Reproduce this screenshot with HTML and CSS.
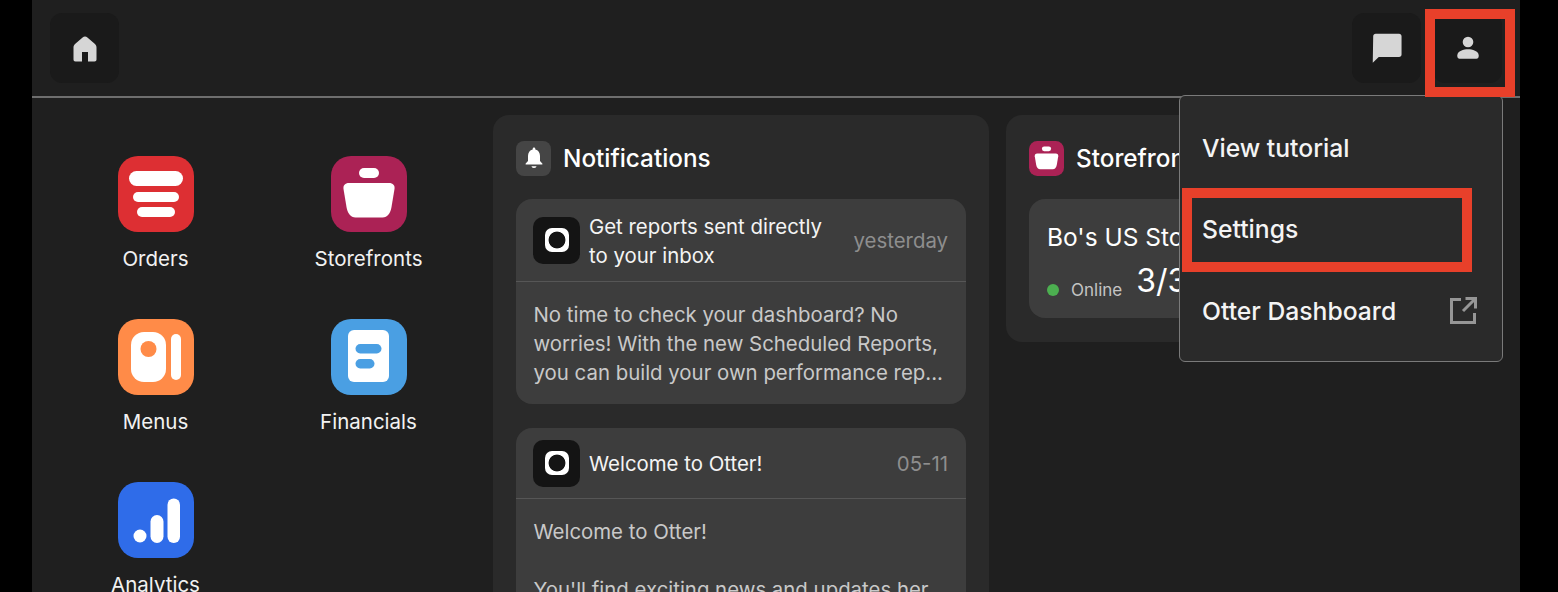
FILE: index.html
```html
<!DOCTYPE html>
<html lang="en">
<head>
  <meta charset="UTF-8" />
  <meta name="viewport" content="width=device-width, initial-scale=1.0" />
  <title>Otter Dashboard</title>
  <link rel="stylesheet" href="styles.css">
</head>
<body>
  <div class="app">
    <header class="topbar">
      <button class="icon-btn">
        <svg class="home-icon" width="24" height="26" viewBox="0 0 24 26"><path d="M12 .5c1 0 1.600.4 2.400 1l7 6c1.600 1.400 2.100 2.600 2.100 4v12c0 1.300-.7 2-2 2H15V16H9v9.500H2.500c-1.300 0-2-.7-2-2v-12c0-1.400.5-2.600 2.100-4l7-6c.8-.6 1.400-1 2.400-1z"/></svg>
      </button>
      <div class="topbar-right">
        <button class="icon-btn">
          <svg width="36" height="36" viewBox="0 0 24 24"><path d="M20 2.500H4.500c-1 0-1.700.7-1.700 1.700L2.500 21.800 6.500 18H20c1 0 1.700-.7 1.700-1.700V4.200c0-1-.7-1.700-1.700-1.700z"/></svg>
        </button>
        <button class="icon-btn">
          <svg width="32" height="32" viewBox="0 0 24 24"><circle cx="12" cy="7.500" r="4"/><path d="M12 13c-3.200 0-8 1.500-8 4.400v1c0 .9.700 1.600 1.600 1.600h12.800c.9 0 1.600-.7 1.600-1.600v-1C20 14.500 15.200 13 12 13z"/></svg>
        </button>
      </div>
    </header>

    <main class="content">
      <!-- App launcher -->
      <section class="launcher">
        <div class="launcher-item">
          <svg class="app-icon" viewBox="0 0 76 76"><rect width="76" height="76" rx="20" fill="#dd2f33"/><rect x="11" y="15" width="54" height="15" rx="7.500" fill="#fff"/><rect x="15" y="36" width="46" height="10" rx="5" fill="#fff"/><rect x="19" y="51" width="38" height="10" rx="5" fill="#fff"/></svg>
          <span>Orders</span>
        </div>
        <div class="launcher-item">
          <svg class="app-icon" viewBox="0 0 76 76"><rect width="76" height="76" rx="20" fill="#ab2255"/><rect x="28" y="12" width="20" height="10" rx="5" fill="#fff"/><path d="M18 27h40c4 0 6 2.500 5.500 6l-3 18c-1 6-4 10.500-9 10.500H24.500c-5 0-8-4.500-9-10.500l-3-18C12 29.500 14 27 18 27z" fill="#fff"/></svg>
          <span>Storefronts</span>
        </div>
        <div class="launcher-item">
          <svg class="app-icon" viewBox="0 0 76 76"><rect width="76" height="76" rx="20" fill="#ff8b48"/><rect x="13" y="13" width="35" height="50" rx="13" fill="#fff"/><circle cx="30.500" cy="30" r="8" fill="#ff8b48"/><rect x="53" y="15" width="10" height="46" rx="5" fill="#fff"/></svg>
          <span>Menus</span>
        </div>
        <div class="launcher-item">
          <svg class="app-icon" viewBox="0 0 76 76"><rect width="76" height="76" rx="20" fill="#4a9fe3"/><rect x="17" y="11" width="41" height="52" rx="6" fill="#fff"/><rect x="24.500" y="25" width="26" height="9.500" rx="4.700" fill="#4a9fe3"/><rect x="24.500" y="40" width="19" height="9.500" rx="4.700" fill="#4a9fe3"/></svg>
          <span>Financials</span>
        </div>
        <div class="launcher-item">
          <svg class="app-icon" viewBox="0 0 76 76"><rect width="76" height="76" rx="20" fill="#2f6ce9"/><circle cx="22" cy="54" r="6.500" fill="#fff"/><rect x="32.500" y="33" width="13" height="28" rx="6.500" fill="#fff"/><rect x="49.500" y="16.500" width="12.500" height="44.500" rx="6.200" fill="#fff"/></svg>
          <span>Analytics</span>
        </div>
      </section>

      <!-- Notifications -->
      <section class="panel notifications">
        <h2 class="panel-title">
          <span class="title-badge">
            <svg width="24" height="24" viewBox="0 0 24 24"><path d="M12 1.500c.8 0 1.300.6 1.300 1.400v.7c3 .7 4.700 3.200 4.700 6.400v5l2.300 2.500c.4.500.1 1.100-.5 1.100H4.200c-.6 0-.9-.6-.5-1.100L6 15v-5c0-3.200 1.700-5.700 4.700-6.400v-.7c0-.8.500-1.400 1.300-1.400zM9.500 20.300h5c0 .8-1 1.700-2.500 1.700s-2.500-.9-2.500-1.700z"/></svg>
          </span>
          Notifications
        </h2>

        <article class="note">
          <div class="note-head note-head-tall">
            <span class="otter-logo"><span class="otter-ring"></span></span>
            <span class="note-title">Get reports sent directly to your inbox</span>
            <span class="note-time">yesterday</span>
          </div>
          <p class="note-body">No time to check your dashboard? No worries! With the new Scheduled Reports, you can build your own performance rep...</p>
        </article>

        <article class="note">
          <div class="note-head">
            <span class="otter-logo"><span class="otter-ring"></span></span>
            <span class="note-title">Welcome to Otter!</span>
            <span class="note-time">05-11</span>
          </div>
          <p class="note-body">Welcome to Otter!<br><br>You'll find exciting news and updates her...</p>
        </article>
      </section>

      <!-- Storefronts -->
      <section class="panel storefronts">
        <h2 class="panel-title">
          <svg class="title-app" viewBox="0 0 76 76"><rect width="76" height="76" rx="18" fill="#ab2255"/><rect x="28" y="12" width="20" height="10" rx="5" fill="#fff"/><path d="M18 27h40c4 0 6 2.500 5.500 6l-3 18c-1 6-4 10.500-9 10.500H24.500c-5 0-8-4.500-9-10.500l-3-18C12 29.500 14 27 18 27z" fill="#fff"/></svg>
          Storefronts
        </h2>
        <div class="store-card">
          <div class="store-name">Bo's US Store</div>
          <div class="store-meta">
            <span class="status-dot"></span>
            <span class="status-text">Online</span>
            <span class="store-count">3/3</span>
          </div>
        </div>
      </section>
    </main>

    <!-- Account menu -->
    <nav class="account-menu">
      <a class="menu-item">View tutorial</a>
      <a class="menu-item">Settings</a>
      <a class="menu-item">Otter Dashboard
        <svg width="27" height="27" viewBox="0 0 27 27" fill="none" stroke="#969696" stroke-width="3"><path d="M11 2.500H1.500v23h23V16M13 14 24.500 2.500M15.500 1.500h10v10"/></svg>
      </a>
    </nav>

    <!-- Callouts -->
    <div class="callout callout-user"></div>
    <div class="callout callout-settings"></div>
  </div>
</body>
</html>
```

FILE: styles.css
```css
* {
  margin: 0;
  padding: 0;
  box-sizing: border-box;
}

html, body {
  height: 100%;
  overflow: hidden;
  background-color: #000;
}

body {
  font-family: 'Inter', 'Liberation Sans', sans-serif;
  color: #fff;
}

.app {
  position: relative;
  width: 1488px;
  height: 592px;
  margin-left: 32px;
  background-color: #1f1f1f;
  overflow: hidden;
}

.topbar {
  height: 98px;
  padding: 13px 18px 0;
  display: flex;
  justify-content: space-between;
  align-items: flex-start;
  border-bottom: 2px solid #6e6e6e;
}

.topbar-right {
  display: flex;
  gap: 12px;
}

.icon-btn {
  width: 69px;
  height: 70px;
  border: none;
  border-radius: 12px;
  background-color: #1a1a1a;
  display: flex;
  align-items: center;
  justify-content: center;
}

.icon-btn svg {
  fill: #d6d6d6;
}

.home-icon {
  margin-top: 2px;
}

.content {
  display: flex;
  align-items: flex-start;
}

.launcher {
  width: 461px;
  padding: 58px 0 0 17px;
  display: grid;
  grid-template-columns: 213px 213px;
  grid-auto-rows: 163px;
}

.launcher-item {
  display: flex;
  flex-direction: column;
  align-items: center;
  gap: 14px;
  font-size: 20.500px;
  line-height: 26px;
  color: #f2f2f2;
}

.app-icon {
  width: 76px;
  height: 76px;
  display: block;
}

.panel {
  margin-top: 17px;
  padding: 24px 23px;
  background-color: #2a2a2a;
  border-radius: 16px;
}

.notifications {
  width: 496px;
  flex-shrink: 0;
}

.storefronts {
  width: 484px;
  margin-left: 17px;
}

.panel-title {
  display: flex;
  align-items: center;
  gap: 12px;
  height: 38px;
  font-size: 24.300px;
  font-weight: 450;
  margin-bottom: 22px;
  white-space: nowrap;
}

.title-badge {
  width: 35px;
  height: 35px;
  border-radius: 8px;
  background-color: #454545;
  display: flex;
  align-items: center;
  justify-content: center;
}

.title-badge svg {
  fill: #fff;
}

.title-app {
  width: 35px;
  height: 35px;
}

.note {
  background-color: #3d3d3d;
  border-radius: 16px;
  margin-bottom: 24px;
  overflow: hidden;
}

.note-head {
  height: 71px;
  padding: 0 18px 0 17px;
  display: flex;
  align-items: center;
  border-bottom: 1px solid #565656;
}

.note-head-tall {
  height: 83px;
}

.note-head-tall .note-title {
  margin-top: 1px;
}

.otter-logo {
  width: 47px;
  height: 47px;
  flex-shrink: 0;
  border-radius: 10px;
  background-color: #141414;
  display: flex;
  align-items: center;
  justify-content: center;
}

.otter-ring {
  width: 24px;
  height: 24px;
  border-radius: 7px;
  background: radial-gradient(circle, #141414 8px, #fff 8.800px);
}

.note-title {
  flex: 1;
  margin-left: 9px;
  padding-right: 20px;
  font-size: 20.400px;
  line-height: 29px;
  color: #f4f4f4;
}

.note-time {
  font-size: 20.400px;
  color: #8e8e8e;
  white-space: nowrap;
}

.note-body {
  padding: 18px 18px 17px 17.500px;
  font-size: 20.400px;
  line-height: 29px;
  color: #c9c9c9;
}

.store-card {
  background-color: #3d3d3d;
  border-radius: 16px;
  height: 119px;
  padding: 21px 18px;
}

.store-name {
  font-size: 24.500px;
  line-height: 34px;
  white-space: nowrap;
}

.store-meta {
  display: flex;
  align-items: center;
  margin-top: 7px;
  white-space: nowrap;
}

.status-dot {
  width: 12px;
  height: 12px;
  border-radius: 50%;
  background-color: #4caf50;
  margin-top: 18px;
}

.status-text {
  font-size: 17px;
  color: #c4c4c4;
  margin: 18px 14px 0 12px;
}

.store-count {
  font-size: 32px;
  line-height: 40px;
}

.account-menu {
  position: absolute;
  top: 95px;
  left: 1147px;
  width: 324px;
  height: 267px;
  padding-top: 11px;
  background-color: #2a2a2a;
  border: 1px solid #7a7a7a;
  border-radius: 6px;
}

.menu-item {
  height: 81.500px;
  padding: 0 25px 0 22px;
  display: flex;
  align-items: center;
  justify-content: space-between;
  font-size: 24.700px;
  font-weight: 450;
  color: #f4f4f4;
}

.callout {
  position: absolute;
  border: 10px solid #e8402a;
}

.callout-user {
  top: 9px;
  left: 1393px;
  width: 90px;
  height: 88px;
}

.callout-settings {
  top: 188px;
  left: 1150px;
  width: 290px;
  height: 84px;
}
```
